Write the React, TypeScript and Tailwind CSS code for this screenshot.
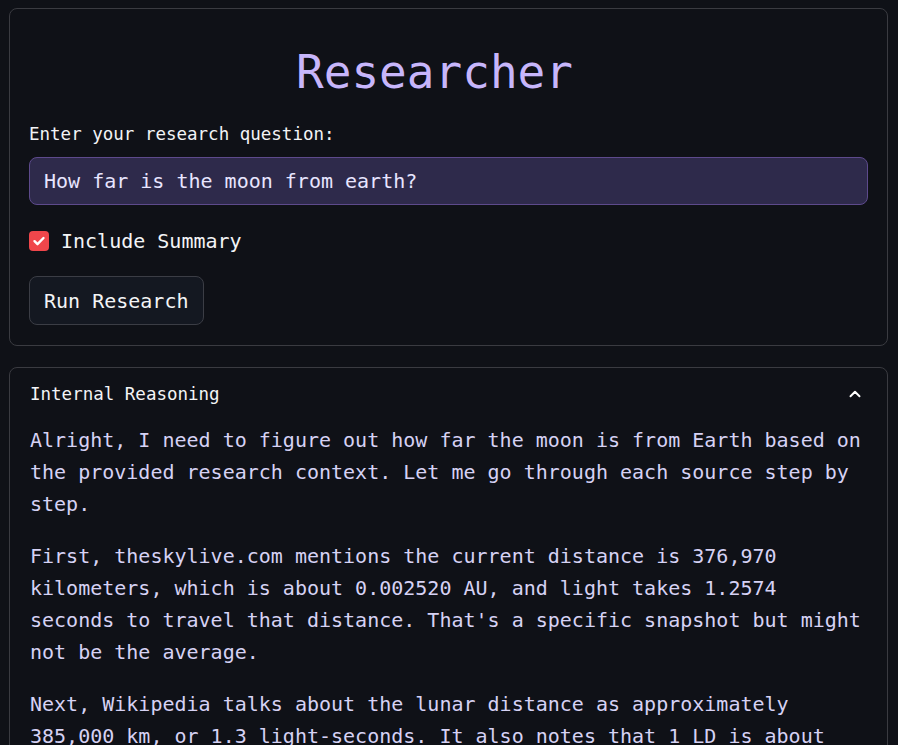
import { ChevronUp } from 'lucide-react';

const paragraphs = [
  'Alright, I need to figure out how far the moon is from Earth based on the provided research context. Let me go through each source step by step.',
  "First, theskylive.com mentions the current distance is 376,970 kilometers, which is about 0.002520 AU, and light takes 1.2574 seconds to travel that distance. That's a specific snapshot but might not be the average.",
  'Next, Wikipedia talks about the lunar distance as approximately 385,000 km, or 1.3 light-seconds. It also notes that 1 LD is about 384,399 km, which is the semi-major axis of the orbit.',
];

export default function App() {
  return (
    <div className="min-h-screen bg-[#0f1117] px-[9px] pt-2 pr-[10px] font-['DejaVu_Sans_Mono',monospace]">
      {/* Input panel */}
      <div className="rounded-lg border border-[#3a3b41] bg-[#0f1117] px-[19px] pb-5 pt-[33px]">
        <h1 className="pr-[28px] text-center text-[46px] leading-[60px] text-[#c7b6fb]">Researcher</h1>

        <label className="mt-5 block text-[17.5px] leading-6 text-[#f3f4f6]">Enter your research question:</label>
        <div className="mt-[11px] flex h-12 items-center rounded-lg border border-[#5d4a8c] bg-[#2e2a4b] px-[14px] text-[20px] text-[#e8e5ff]">
          How far is the moon from earth?
        </div>

        <div className="mt-[26px] flex h-5 items-center gap-3">
          <span className="flex h-5 w-5 items-center justify-center rounded-[4px] bg-[#f0464b]">
            <svg width="14" height="14" viewBox="0 0 14 14" fill="none">
              <path d="M2.5 7.2l3 3 6-6.2" stroke="white" strokeWidth="2.4" strokeLinecap="round" strokeLinejoin="round" />
            </svg>
          </span>
          <span className="text-[20px] leading-6 text-[#f3f4f6]">Include Summary</span>
        </div>

        <button className="mt-[25px] flex h-[49px] items-center rounded-lg border border-[#3b3d45] bg-[#141821] px-[14px] text-[20px] text-[#f3f4f6]">
          Run Research
        </button>
      </div>

      {/* Reasoning accordion */}
      <div className="mt-[21px] rounded-lg border border-[#3a3b41] bg-[#0f1117] px-5 pt-[14px] pb-5">
        <div className="flex items-center justify-between">
          <span className="text-[17.5px] leading-6 text-[#f3f4f6]">Internal Reasoning</span>
          <ChevronUp size={18} strokeWidth={2.6} className="mr-[3px] text-white" />
        </div>
        <div className="mt-[18px] flex flex-col gap-5 text-[20px] leading-8 text-[#d6d2f4]">
          {paragraphs.map((p) => (
            <p key={p.slice(0, 12)}>{p}</p>
          ))}
        </div>
      </div>
    </div>
  );
}
